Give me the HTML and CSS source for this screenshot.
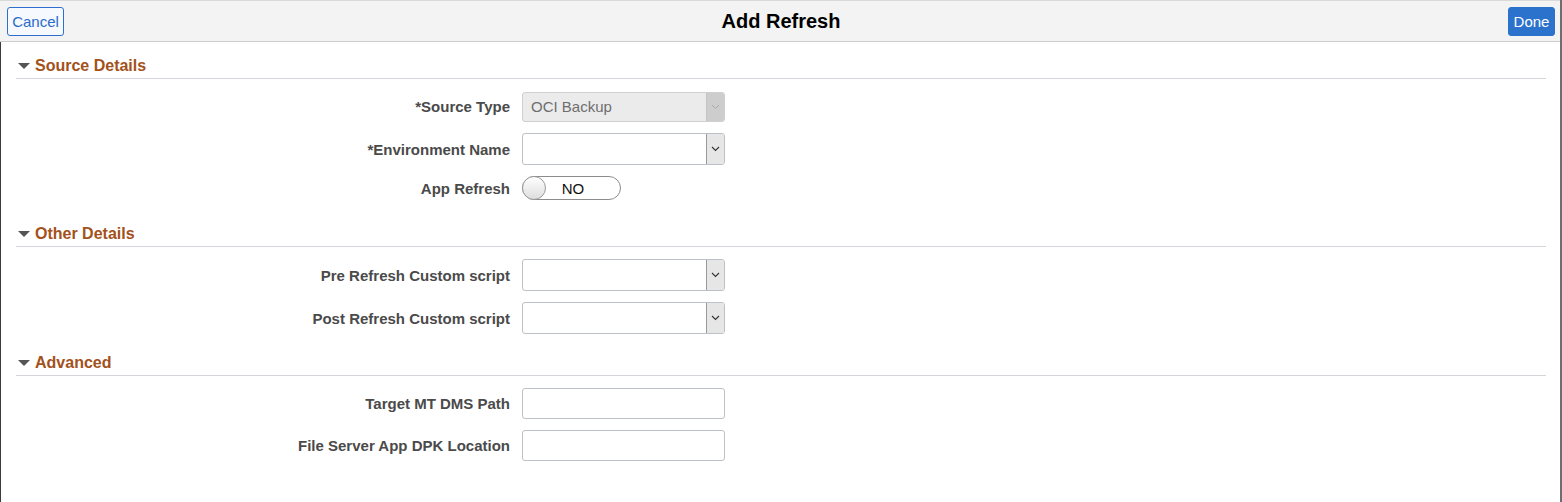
FILE: index.html
```html
<!DOCTYPE html>
<html>
<head>
<meta charset="utf-8">
<link rel="stylesheet" href="styles.css">
</head>
<body>
<div class="page">
  <header class="bar">
    <div class="bar-left"><button class="btn btn-cancel">Cancel</button></div>
    <h1 class="title">Add Refresh</h1>
    <div class="bar-right"><button class="btn btn-done">Done</button></div>
  </header>
  <main class="content">
    <section class="group">
      <h2 class="group-head"><span class="caret"></span>Source Details</h2>
      <div class="row">
        <label class="lbl">*Source Type</label>
        <div class="select disabled"><span class="val">OCI Backup</span><span class="arrow"><svg width="9" height="6" viewBox="0 0 9 6"><path d="M1 1l3.5 3.5L8 1" fill="none" stroke="#aaa" stroke-width="1"/></svg></span></div>
      </div>
      <div class="row tall">
        <label class="lbl">*Environment Name</label>
        <div class="select"><span class="val"></span><span class="arrow"><svg width="9" height="6" viewBox="0 0 9 6"><path d="M1 1l3.5 3.5L8 1" fill="none" stroke="#333" stroke-width="1.1"/></svg></span></div>
      </div>
      <div class="row short">
        <label class="lbl">App Refresh</label>
        <div class="toggle"><span class="knob"></span><span class="tog-text">NO</span></div>
      </div>
    </section>
    <section class="group">
      <h2 class="group-head"><span class="caret"></span>Other Details</h2>
      <div class="row tall">
        <label class="lbl">Pre Refresh Custom script</label>
        <div class="select"><span class="val"></span><span class="arrow"><svg width="9" height="6" viewBox="0 0 9 6"><path d="M1 1l3.5 3.5L8 1" fill="none" stroke="#333" stroke-width="1.1"/></svg></span></div>
      </div>
      <div class="row tall">
        <label class="lbl">Post Refresh Custom script</label>
        <div class="select"><span class="val"></span><span class="arrow"><svg width="9" height="6" viewBox="0 0 9 6"><path d="M1 1l3.5 3.5L8 1" fill="none" stroke="#333" stroke-width="1.1"/></svg></span></div>
      </div>
    </section>
    <section class="group">
      <h2 class="group-head"><span class="caret"></span>Advanced</h2>
      <div class="row">
        <label class="lbl">Target MT DMS Path</label>
        <div class="input"></div>
      </div>
      <div class="row">
        <label class="lbl">File Server App DPK Location</label>
        <div class="input"></div>
      </div>
    </section>
  </main>
</div>
</body>
</html>
```
FILE: styles.css
```css
* { box-sizing: border-box; }
html, body { margin: 0; padding: 0; background: #fff; }
body { font-family: "Liberation Sans", Arial, sans-serif; }
.page {
  width: 1562px;
  height: 502px;
  border-right: 2px solid #6e6e6e;
  display: flex;
  flex-direction: column;
}
.bar {
  height: 42px;
  background: #f3f3f3;
  border-top: 1px solid #d9d9d9;
  border-bottom: 1px solid #cdcdcd;
  display: grid;
  grid-template-columns: 1fr auto 1fr;
  align-items: center;
  padding: 0 5px 0 7px;
}
.bar-left { display: flex; justify-content: flex-start; }
.bar-right { display: flex; justify-content: flex-end; }
.btn {
  font-family: "Liberation Sans", Arial, sans-serif;
  font-size: 15px;
  height: 29px;
  border-radius: 3px;
  padding: 0 4px;
  cursor: pointer;
}
.btn-cancel {
  background: #f6f9fd;
  border: 1px solid #2c6fcf;
  color: #2a6bc9;
  width: 57px;
}
.btn-done {
  background: #2a72cc;
  border: 1px solid #2a72cc;
  color: #fff;
  width: 47px;
}
.title {
  margin: 0;
  font-size: 20px;
  font-weight: bold;
  color: #000;
}
.content {
  flex: 1;
  border-left: 1px solid #3c3c3c;
  padding: 14px 14px 0 15px;
}
.group + .group { margin-top: 19px; }
.group-head {
  margin: 0 0 12px 0;
  font-size: 16px;
  font-weight: bold;
  line-height: 20px;
  color: #a3511b;
  padding-bottom: 2px;
  border-bottom: 1px solid #d2d5da;
  display: flex;
  align-items: center;
}
.caret {
  width: 0;
  height: 0;
  border-left: 6px solid transparent;
  border-right: 6px solid transparent;
  border-top: 6px solid #555;
  margin: 0 5px 0 2px;
}
.row {
  display: grid;
  grid-template-columns: 494px 203px;
  column-gap: 12px;
  align-items: center;
  height: 31px;
  margin-bottom: 11px;
}
.row.tall { height: 32px; }
.row:last-child { margin-bottom: 0; }
.row.short { height: 29px; padding-bottom: 5px; }
.lbl {
  text-align: right;
  font-size: 15px;
  font-weight: bold;
  color: #4a4a4a;
}
.select, .input {
  height: 100%;
  border: 1px solid #bcc1c7;
  border-radius: 3px;
  background: #fff;
  display: flex;
  align-items: center;
  overflow: hidden;
}
.select .val {
  flex: 1;
  padding-left: 8px;
  font-size: 15px;
  color: #6e6e6e;
}
.select .arrow {
  width: 18px;
  height: 100%;
  background: #e6e6e6;
  border-left: 1px solid #9a9a9a;
  display: flex;
  align-items: center;
  justify-content: center;
}
.select.disabled { background: #ebebeb; border-color: #cfcfcf; height: 30px; }
.select.disabled .arrow { background: #cdcdcd; border-left-color: #c4c4c4; }
.toggle {
  width: 99px;
  height: 24px;
  border: 1px solid #8c8c8c;
  border-radius: 12px;
  background: #fff;
  display: flex;
  align-items: center;
  position: relative;
}
.knob {
  width: 24px;
  height: 24px;
  margin-left: -1px;
  border-radius: 50%;
  border: 1px solid #9a9a9a;
  background: linear-gradient(#ffffff, #dedede);
}
.tog-text {
  flex: 1;
  text-align: center;
  font-size: 15px;
  color: #111;
  padding-right: 20px;
}
```
